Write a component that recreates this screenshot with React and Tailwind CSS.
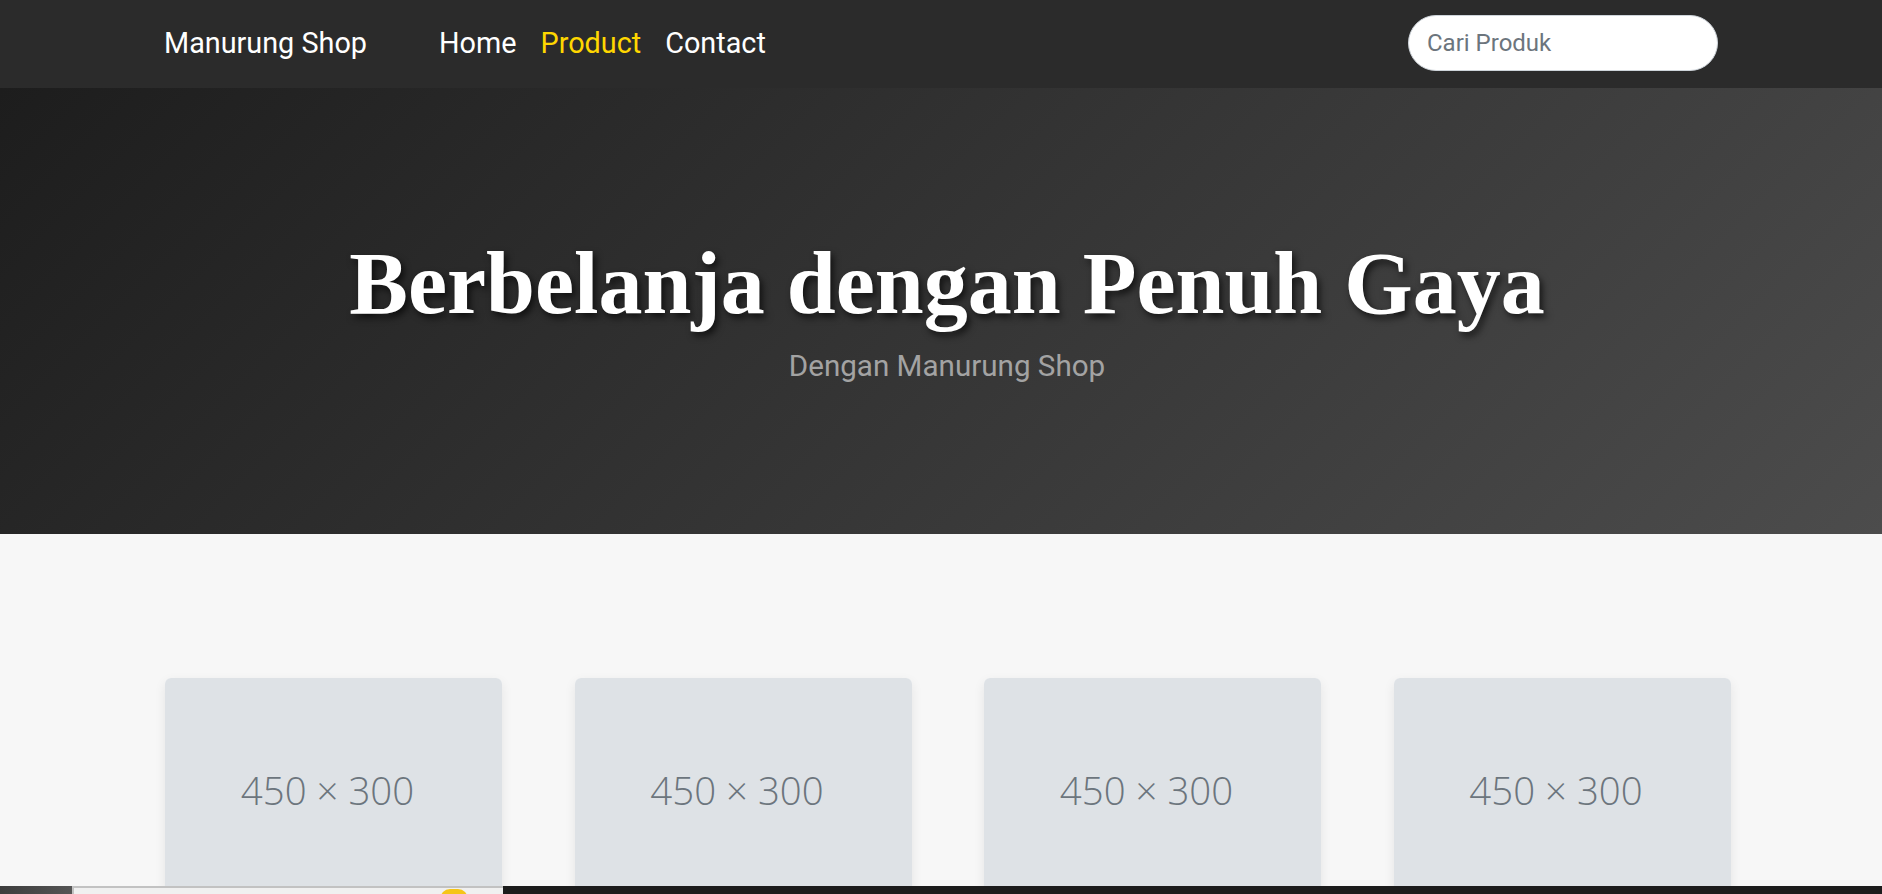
import React from "react";

const roboto = { fontFamily: "Roboto, 'Noto Sans', Arial, sans-serif" };

function Card() {
  return (
    <div className="w-[337px] shrink-0 rounded-[6px] bg-white shadow-[0_4px_12px_rgba(0,0,0,0.08)] overflow-hidden">
      <div className="h-[225px] bg-[#dee2e6] flex items-center justify-center pr-[12px]">
        <span
          className="text-[38.4px] font-light text-[#6c757d] leading-none"
          style={{ fontFamily: "'Open Sans', 'Noto Sans', sans-serif", fontWeight: 300 }}
        >
          450 × 300
        </span>
      </div>
      <div className="h-[180px] bg-white" />
    </div>
  );
}

export default function App() {
  return (
    <div className="min-h-screen bg-[#f7f7f7]" style={roboto}>
      <nav className="h-[88px] bg-[#2b2b2b]">
        <div className="w-[1554px] mx-auto h-full flex items-center pb-[2px]">
          <a className="text-[28.8px] leading-none text-white">Manurung Shop</a>
          <div className="ml-[72px] flex items-center gap-[24px] text-[28.8px] leading-none">
            <a className="text-white">Home</a>
            <a className="text-[#ffd700]">Product</a>
            <a className="text-white">Contact</a>
          </div>
          <input
            type="text"
            placeholder="Cari Produk"
            className="ml-auto w-[310px] h-[56px] rounded-full border border-[#ced4da] bg-white pl-[18px] pr-[18px] text-[24px] text-[#212529] placeholder:text-[#6c757d] outline-none"
            style={roboto}
          />
        </div>
      </nav>

      <header className="h-[446px] bg-[linear-gradient(135deg,#1d1d1d,#4c4c4c)] flex flex-col items-center justify-center">
        <h1
          className="pl-[12px] text-[88px] font-bold leading-none text-white [text-shadow:3px_4px_7px_rgba(0,0,0,0.65)]"
          style={{ fontFamily: "'Liberation Serif', 'Times New Roman', serif" }}
        >
          Berbelanja dengan Penuh Gaya
        </h1>
        <p className="mt-[24px] pl-[12px] text-[29.6px] leading-none text-[#a3a3a3]">Dengan Manurung Shop</p>
      </header>

      <section className="pt-[144px] pl-[165px] flex gap-[72.5px] h-[360px] overflow-hidden">
        <Card />
        <Card />
        <Card />
        <Card />
      </section>

      <div className="fixed bottom-0 left-0 right-0 h-[8px] flex">
        <div className="w-[72px] h-full bg-linear-to-r from-[#3d3d3d] to-[#555555]" />
        <div className="relative w-[431px] h-full bg-[#f0f0f0] border-t-2 border-l-2 border-[#c2c2c2]">
          <div className="absolute left-[366px] top-[1px] w-[28px] h-[10px] rounded-t-full bg-[#f5c518]" />
        </div>
        <div className="flex-1 h-full bg-[#1c1c1c]" />
      </div>
    </div>
  );
}
